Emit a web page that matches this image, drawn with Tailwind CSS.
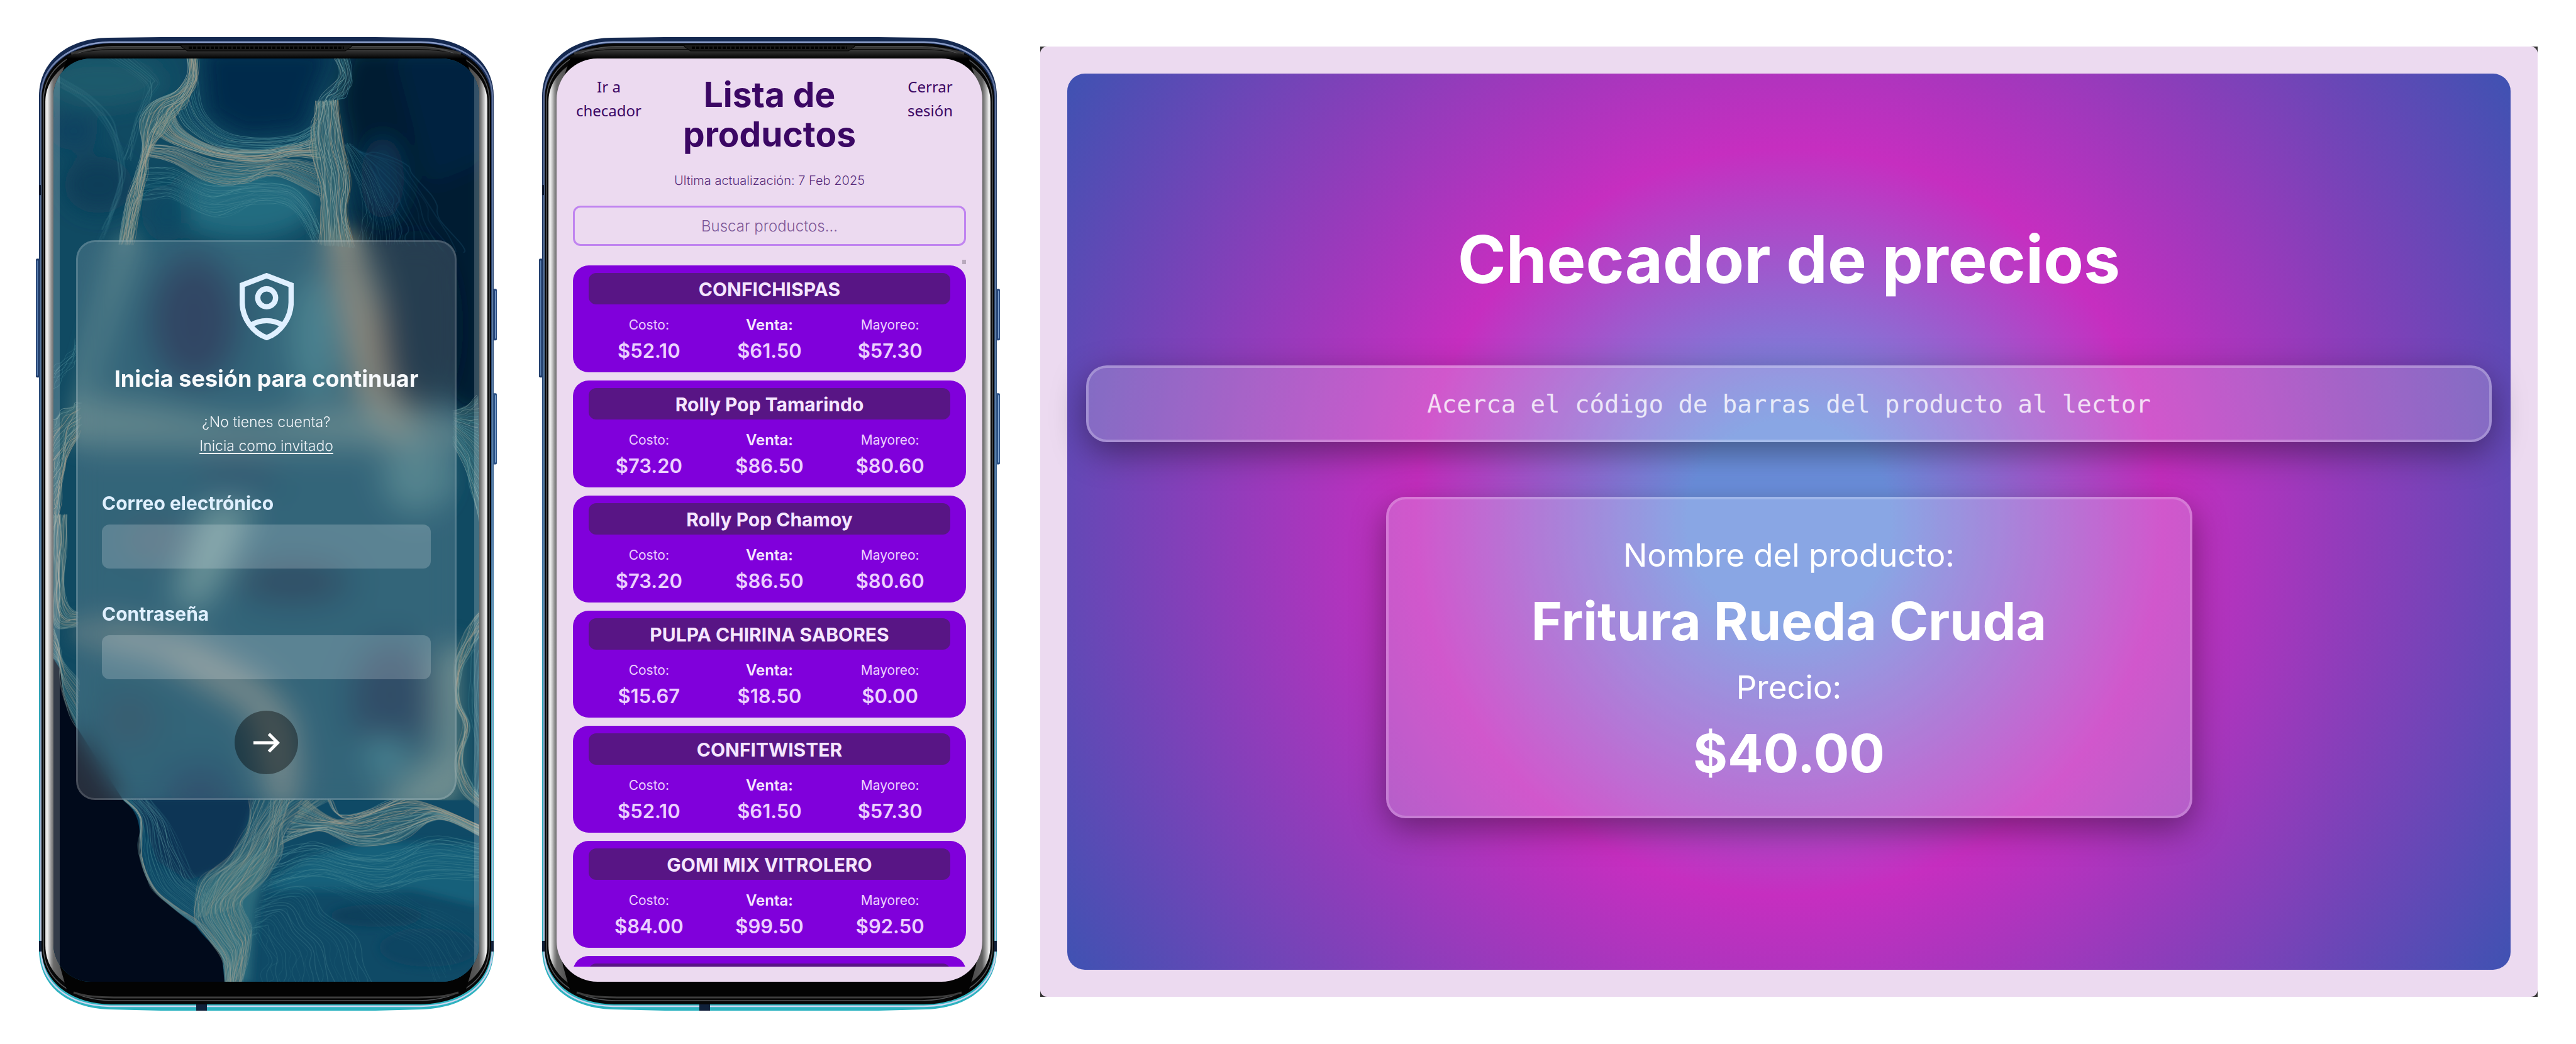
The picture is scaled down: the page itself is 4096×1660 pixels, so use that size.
<!DOCTYPE html>
<html lang="es">
<head>
<meta charset="utf-8">
<meta name="viewport" content="width=device-width, initial-scale=1">
<title>Checador de precios</title>
<script src="https://cdn.jsdelivr.net/npm/@tailwindcss/browser@4"></script>
</head>
<body class="bg-white font-['Inter',sans-serif]">

<!-- Phone body, shared by both devices -->
<svg class="absolute size-0" aria-hidden="true">
  <defs>
    <linearGradient id="rim" x1="0" y1="0" x2="0" y2="1">
      <stop offset="0" stop-color="#14284f"/><stop offset=".3" stop-color="#1f3a66"/><stop offset=".52" stop-color="#3d6a9c"/><stop offset=".68" stop-color="#2aa5b6"/><stop offset="1" stop-color="#2db3c0"/>
    </linearGradient>
    <linearGradient id="rimLight" x1="0" y1="0" x2="0" y2="1">
      <stop offset="0" stop-color="#8c9fcc"/><stop offset=".04" stop-color="#5f7099"/><stop offset=".5" stop-color="#5580a8"/><stop offset="1" stop-color="#cfd6f0"/>
    </linearGradient>
    <linearGradient id="silver" x1="0" y1="0" x2="1" y2="0">
      <stop offset="0" stop-color="#c9c9c9"/><stop offset=".004" stop-color="#f2f2f2"/><stop offset=".009" stop-color="#c4c4c4"/><stop offset=".014" stop-color="#8e8e8e"/><stop offset=".019" stop-color="#6b6b6b"/><stop offset=".05" stop-color="#444"/>
      <stop offset=".95" stop-color="#444"/><stop offset=".981" stop-color="#5e5e5e"/><stop offset=".987" stop-color="#8e8e8e"/><stop offset=".993" stop-color="#c9c9c9"/><stop offset=".997" stop-color="#f7f7f7"/><stop offset="1" stop-color="#c9c9c9"/>
    </linearGradient>
    <linearGradient id="shade" x1="0" y1="0" x2="0" y2="1">
      <stop offset="0" stop-color="#3a3a3a"/><stop offset=".09" stop-color="#1a1a1a"/><stop offset=".16" stop-color="#000"/><stop offset="1" stop-color="#000"/>
    </linearGradient>
    <symbol id="phone" viewBox="0 0 736 1548" preserveAspectRatio="none">
      <rect x="0" y="353" width="8" height="189" rx="2" fill="#1c3866"/>
      <rect x="1.5" y="356" width="2" height="183" fill="#5b7fb0"/>
      <rect x="725" y="401" width="8" height="82" rx="2" fill="#27477c"/>
      <rect x="730" y="404" width="1.500" height="76" fill="#7fa0cc"/>
      <rect x="725" y="567" width="8" height="113" rx="2" fill="#2c5286"/>
      <rect x="730" y="570" width="1.500" height="107" fill="#86a9d3"/>
      <path d="M5 95C5 40 50 3 115 2L200 1H540L615 2C682 3 728 40 728 95V1450C728 1508 685 1543 615 1546L540 1548H200L115 1546C48 1543 5 1508 5 1450Z" fill="url(#rim)"/>
      <path d="M8 97C8 45 55 10 118 9H612C680 10 726 45 726 97V1450C726 1504 683 1540 612 1541H118C50 1540 8 1504 8 1450Z" fill="none" stroke="url(#rimLight)" stroke-width="2.500"/>
      <rect x="5" y="236" width="3" height="16" fill="#0c1a33"/>
      <rect x="5" y="1437" width="4" height="17" fill="#10203a"/>
      <rect x="724" y="1437" width="4" height="17" fill="#10203a"/>
      <rect x="255" y="1537" width="17" height="11" fill="#10203a"/>
      <path d="M9 100C9 48 56 12 120 11H611C676 12 724 48 724 100V1448C724 1500 680 1537 611 1538H120C53 1537 9 1500 9 1448Z" fill="#070707"/>
      <path d="M12 102C12 52 58 17 122 16H609C672 17 721 52 721 102V1446C721 1498 676 1531 609 1532H122C56 1531 12 1498 12 1446Z" fill="none" stroke="#55575a" stroke-width="1.500"/>
      <path d="M15 104C15 58 62 24 124 23H607C670 24 718 58 718 104V1444C718 1492 672 1526 607 1527H124C60 1526 15 1492 15 1444Z" fill="url(#silver)"/>
      <path d="M51 31C72 24 96 22 124 21H607C636 22 660 24 682 31L692 60L700 110H33L41 60Z" fill="url(#shade)"/>
      <path d="M38 1476L33 1430H700L695 1476L683 1518C660 1526 636 1528 607 1529H124C96 1528 72 1526 50 1518Z" fill="#030303"/>
      <path d="M60 1519C80 1526 100 1527 124 1527H607C632 1527 652 1526 672 1519" fill="none" stroke="#3c3c3c" stroke-width="3"/>
      <path d="M56 27C78 21 100 18 124 18H607C632 18 654 21 676 27" fill="none" stroke="#4a4a4a" stroke-width="4" opacity=".7"/>
      <path d="M231 13H502V16L492 23H241L231 16Z" fill="#1b1b1b" stroke="#050505"/>
      <path d="M243 18H490" stroke="#000" stroke-width="4" stroke-dasharray="5 2"/>
    </symbol>
    <filter id="soft" x="-50%" y="-50%" width="200%" height="200%"><feGaussianBlur stdDeviation="34"/></filter>
    <filter id="softer" x="-50%" y="-50%" width="200%" height="200%"><feGaussianBlur stdDeviation="14"/></filter>
  </defs>
</svg>

<main class="flex min-h-screen items-start pt-[58px] pr-[61px] pl-[57px]">
  <div class="flex shrink-0 gap-16">

    <!-- Login -->
    <section class="relative w-[736px] pt-[35px] pr-[31px] pb-[46px] pl-[28px]">
      <svg class="absolute inset-0 h-full w-full" aria-hidden="true"><use href="#phone"/></svg>
      <div class="relative flex min-h-[1468px] items-center overflow-hidden rounded-[60px] bg-[#0c3f58] px-9">
        <svg class="absolute inset-0 h-full w-full" viewBox="0 0 677 1467" preserveAspectRatio="none" aria-hidden="true">
          <rect width="677" height="1467" fill="#104a62"/>
          <g transform="matrix(.491 0 0 .5003 -41.4 -49.4)" id="upper">
            <g filter="url(#soft)">
              <path d="M1040 60H1500V1240L1380 1220L1060 700L1040 400L1000 230Z" fill="#021a33"/>
              <path d="M1180 60H1500V420L1300 500Z" fill="#03213f"/>
              <path d="M560 60H1000L930 230L900 330L700 350L580 280Z" fill="#04294b"/>
              <ellipse cx="240" cy="170" rx="200" ry="80" fill="#1c5a6c"/>
              <ellipse cx="230" cy="500" rx="110" ry="90" fill="#0d3c58"/>
              <ellipse cx="150" cy="330" rx="80" ry="60" fill="#0e4360"/>
              <ellipse cx="700" cy="560" rx="230" ry="110" fill="#236c80"/>
              <ellipse cx="450" cy="590" rx="80" ry="90" fill="#0f4964"/>
              <ellipse cx="1150" cy="480" rx="70" ry="130" fill="#0a3652"/>
            </g>
            <g filter="url(#soft)">
              <ellipse cx="540" cy="930" rx="140" ry="200" fill="#07284a"/>
              <ellipse cx="1260" cy="950" rx="120" ry="280" fill="#021a33"/>
              <path d="M960 640L1070 650L1130 900L1160 1150L1260 1280L1180 1320L1060 1150L1020 900Z" fill="#7d7869"/>
              <path d="M300 660L360 660L260 950L180 1220H150Z" fill="#528085"/>
              <path d="M150 1180C500 1180 600 1280 820 1240C1000 1180 1200 1200 1380 1250V1340L900 1330L150 1330Z" fill="#6c8a88" opacity=".6"/>
              <ellipse cx="680" cy="1430" rx="130" ry="90" fill="#0c3f5c"/>
              <ellipse cx="930" cy="980" rx="80" ry="200" fill="#2a6c7b"/>
              <ellipse cx="1260" cy="1430" rx="110" ry="110" fill="#37707b"/>
            </g>
          </g>
          <g transform="matrix(.491 0 0 .5096 -41.4 735)" id="lower">
            <g filter="url(#soft)">
              <ellipse cx="420" cy="60" rx="110" ry="50" fill="#26455c"/>
              <path d="M580 -60L740 -60L640 160L560 280L470 250Z" fill="#548388"/>
              <ellipse cx="860" cy="190" rx="180" ry="60" fill="#0b2f4a"/>
              <path d="M150 330L300 320L560 390L760 500L860 620L880 860H780L730 600L420 420L150 360Z" fill="#80877f" opacity=".8"/>
              <ellipse cx="1180" cy="560" rx="130" ry="180" fill="#0a2f4e"/>
              <ellipse cx="330" cy="620" rx="90" ry="90" fill="#124258"/>
              <ellipse cx="560" cy="830" rx="110" ry="60" fill="#0c3656"/>
              <path d="M1330 400L1400 380V880L1100 880L1330 740Z" fill="#5f8080"/>
              <ellipse cx="1160" cy="730" rx="70" ry="50" fill="#2c7585"/>
            </g>
            <path d="M60 870H1500V1460H640Z" fill="#0f4a66"/>
            <g filter="url(#softer)">
              <path d="M330 860H740L690 1000L640 1080L520 1120L420 1060L380 950Z" fill="#0a3655"/>
              <path d="M760 1150L900 1050L1100 1000L1460 1010V1200L1250 1150Z" fill="#17607a"/>
              <ellipse cx="1130" cy="1230" rx="150" ry="35" fill="#0c3f5b"/>
              <ellipse cx="1300" cy="1330" rx="160" ry="60" fill="#0c4562"/>
              <path d="M580 1120L800 1000L740 1200L720 1440H650L600 1300L550 1210Z" fill="#2b6b7b"/>
            </g>
            <path d="M60 400L85 430L105 460C112 500 118 560 158 640L310 870C350 900 365 930 365 1000C365 1060 385 1120 420 1160C460 1200 500 1230 545 1262C580 1310 620 1330 632 1370L640 1460H60Z" fill="#010a1b"/>
          </g>
        </svg>

        <form class="relative flex w-full flex-col items-center rounded-[30px] border-[3px] border-white/15 bg-white/15 px-[38px] pt-[49px] pb-[38px] backdrop-blur-[20px]">
          <svg class="h-[107px] w-[86px]" viewBox="130 106 357 444" fill="none" stroke="#e0f0ff" stroke-width="35" aria-hidden="true">
            <path d="M308.500 124L470 186V300C470 400 402 500 308.500 533C215 500 147 400 147 300V186Z"/>
            <circle cx="308.500" cy="270" r="59"/>
            <path d="M205 450C268 411 349 411 412 450"/>
          </svg>
          <h1 class="mt-[37px] text-[36px] leading-[48px] font-bold whitespace-nowrap text-slate-50">Inicia sesión para continuar</h1>
          <p class="mt-[26px] text-center text-[23px] leading-[38px] font-light text-slate-100">¿No tienes cuenta?<br><a href="#" class="underline underline-offset-[3px]">Inicia como invitado</a></p>
          <label for="correo" class="mt-[52px] self-start text-[30px] leading-[40px] font-bold text-[#e0f0ff]">Correo electrónico</label>
          <input id="correo" type="email" class="mt-[14px] h-[70px] w-full rounded-xl bg-white/20 px-5 text-[28px] text-white outline-none">
          <label for="clave" class="mt-[52px] self-start text-[30px] leading-[40px] font-bold text-[#e0f0ff]">Contraseña</label>
          <input id="clave" type="password" class="mt-[14px] h-[70px] w-full rounded-xl bg-white/20 px-5 text-[28px] text-white outline-none">
          <button type="submit" aria-label="Entrar" class="mt-[50px] flex size-[101px] items-center justify-center rounded-full bg-black/40">
            <svg class="h-8 w-[42px]" viewBox="0 0 42 32" fill="none" stroke="#fff" stroke-width="5" aria-hidden="true"><path d="M0 16H39M24.500 2L38.500 16L24.500 30"/></svg>
          </button>
        </form>

        <!-- Curved-glass reflections -->
        <div class="absolute inset-y-0 left-0 w-[10px] bg-white/20"></div>
        <div class="absolute inset-y-0 right-0 w-[8px] bg-white/20"></div>
      </div>
    </section>

    <!-- Product list -->
    <section class="relative w-[736px] pt-[35px] pr-[31px] pb-[46px] pl-[28px]">
      <svg class="absolute inset-0 h-full w-full" aria-hidden="true"><use href="#phone"/></svg>
      <div class="relative flex h-[1468px] flex-col overflow-hidden rounded-[65px] bg-[#ecdaf0] px-[26px] pt-[26px] pb-6 text-[#3b0764]">
        <header class="flex items-start">
          <a href="#" class="w-[114px] text-center font-['Noto_Sans',sans-serif] text-[24px] leading-[38px]">Ir a checador</a>
          <h2 class="flex-1 text-center text-[55px] leading-[63px] font-bold">Lista de<br>productos</h2>
          <a href="#" class="w-[114px] text-center font-['Noto_Sans',sans-serif] text-[24px] leading-[38px]">Cerrar sesión</a>
        </header>
        <p class="mt-[27px] text-center text-[20px] leading-[30px] font-light text-[#3b0764]/85">Ultima actualización: 7 Feb 2025</p>
        <input type="text" role="searchbox" aria-label="Buscar productos" placeholder="Buscar productos..." class="mt-[25px] h-16 w-full shrink-0 rounded-xl border-[3px] border-[#c084f0] text-center text-[24px] font-light outline-none placeholder:text-[#3b0764]/65">
        <div class="relative mt-[31px] min-h-0 flex-1">
          <div class="absolute -top-[9px] right-0 h-[7px] w-[6px] bg-[#b9a9bd]"></div>
          <ul id="lista" class="flex h-full flex-col gap-[13px] overflow-hidden"></ul>
        </div>
      </div>
    </section>
  </div>

  <!-- Price checker -->
  <div class="mt-4 ml-[61px] flex-1 bg-[#333]">
    <section class="flex min-h-[1511px] rounded-[11px] bg-[#ecdaf0] p-[43px]">
      <div class="flex flex-1 flex-col items-center rounded-[28px] bg-[radial-gradient(circle,#6c90de_12%,#c62ec0_44%,#3f52b2_100%)] px-[30px] pt-[231px] text-white">
        <h2 class="text-[104px] leading-[128px] font-bold">Checador de precios</h2>
        <input type="text" aria-label="Código de barras" placeholder="Acerca el código de barras del producto al lector" class="mt-[105px] h-[122px] w-full rounded-[33px] border-4 border-white/25 bg-white/20 text-center font-['DejaVu_Sans_Mono',monospace] text-[39px] shadow-[0_17px_54px_rgba(0,0,0,0.4)] outline-none placeholder:text-white/80">
        <dl class="mt-[87px] w-[1282px] rounded-[31px] border-4 border-white/20 bg-white/20 px-8 pt-[50px] pb-[33px] text-center shadow-[0_17px_54px_rgba(0,0,0,0.4)]">
          <dt class="text-[51px] leading-[78px]">Nombre del producto:</dt>
          <dd class="text-[84px] leading-[132px] font-bold">Fritura Rueda Cruda</dd>
          <dt class="text-[51px] leading-[78px]">Precio:</dt>
          <dd class="text-[84px] leading-[132px] font-bold">$40.00</dd>
        </dl>
      </div>
    </section>
  </div>
</main>

<script>
// ---- Product cards ----
const productos = [
  ['CONFICHISPAS', '$52.10', '$61.50', '$57.30'],
  ['Rolly Pop Tamarindo', '$73.20', '$86.50', '$80.60'],
  ['Rolly Pop Chamoy', '$73.20', '$86.50', '$80.60'],
  ['PULPA CHIRINA SABORES', '$15.67', '$18.50', '$0.00'],
  ['CONFITWISTER', '$52.10', '$61.50', '$57.30'],
  ['GOMI MIX VITROLERO', '$84.00', '$99.50', '$92.50'],
];
document.getElementById('lista').innerHTML = productos.map(([nombre, costo, venta, mayoreo]) => `
  <li class="h-[170px] shrink-0 rounded-[25px] bg-[#8000db] px-[25px] py-3 text-center">
    <h3 class="h-[50px] rounded-xl bg-[#581585] text-[30px] leading-[52px] font-bold text-[#f5e6ff]">${nombre}</h3>
    <dl class="mt-4 grid grid-cols-3">
      <div><dt class="text-[21px] leading-[34px] text-[#ecd0ff]">Costo:</dt><dd class="text-[31px] leading-[48px] font-semibold text-[#ecd0ff]">${costo}</dd></div>
      <div><dt class="text-[24px] leading-[34px] font-semibold text-[#f5e6ff]">Venta:</dt><dd class="text-[31px] leading-[48px] font-semibold text-[#ecd0ff]">${venta}</dd></div>
      <div><dt class="text-[21px] leading-[34px] text-[#ecd0ff]">Mayoreo:</dt><dd class="text-[31px] leading-[48px] font-semibold text-[#ecd0ff]">${mayoreo}</dd></div>
    </dl>
  </li>`).join('') + `
  <li class="h-[170px] shrink-0 rounded-[25px] bg-[#8000db] px-[25px] py-3" aria-hidden="true"><div class="h-[50px] rounded-xl bg-[#581585]"></div></li>`;

// ---- Wallpaper: ribbons of fine lines between two edge curves ----
let seed = 7;
const rnd = () => (seed = (seed * 16807) % 2147483647) / 2147483647;
const TAN = ['#b3a58f', '#9aa39a', '#86a5a3', '#a89c88', '#6f9a9d'];
const TEAL = ['#4d8d99', '#5f9ba2', '#3b7d8d'];
const smooth = p => {
  let d = `M${p[0][0].toFixed(1)} ${p[0][1].toFixed(1)}`;
  for (let i = 0; i < p.length - 1; i++) {
    const a = p[i - 1] || p[i], b = p[i], c = p[i + 1], e = p[i + 2] || c;
    d += `C${(b[0] + (c[0] - a[0]) / 6).toFixed(1)} ${(b[1] + (c[1] - a[1]) / 6).toFixed(1)} ${(c[0] - (e[0] - b[0]) / 6).toFixed(1)} ${(c[1] - (e[1] - b[1]) / 6).toFixed(1)} ${c[0].toFixed(1)} ${c[1].toFixed(1)}`;
  }
  return d;
};
const dense = (p, n) => {
  const out = [];
  for (let i = 0; i < p.length - 1; i++) for (let k = 0; k < n; k++) {
    const t = k / n, a = p[i - 1] || p[i], b = p[i], c = p[i + 1], e = p[i + 2] || c;
    out.push([0, 1].map(j => .5 * (2 * b[j] + (c[j] - a[j]) * t + (2 * a[j] - 5 * b[j] + 4 * c[j] - e[j]) * t * t + (3 * b[j] - a[j] - 3 * c[j] + e[j]) * t * t * t)));
  }
  out.push(p[p.length - 1]);
  return out;
};
function ribbon(id, a, b, n, palette, opacity, jitter = 5, width = 2, body = 0) {
  const A = dense(a, 4), B = dense(b, 4);
  let s = '';
  if (body) s += `<path d="${smooth(A)}L${[...B].reverse().map(q => q.map(v => v.toFixed(1)).join(' ')).join('L')}Z" fill="#4f7d80" opacity="${body}"/>`;
  for (let i = 0; i < n; i++) {
    const t = n > 1 ? i / (n - 1) : 0, ph = rnd() * 6.28, f = .5 + rnd() * .8, m = jitter * (.4 + rnd() * .8);
    const pts = A.map((q, k) => {
      const w = Math.sin(k * f + ph) * m;
      return [q[0] + (B[k][0] - q[0]) * t + w, q[1] + (B[k][1] - q[1]) * t + w * .6];
    });
    s += `<path d="${smooth(pts)}" fill="none" stroke="${palette[Math.floor(rnd() * palette.length)]}" stroke-width="${width}" opacity="${(opacity * (.5 + rnd() * .6)).toFixed(2)}"/>`;
  }
  document.getElementById(id).insertAdjacentHTML('beforeend', s);
}
// faint veils, upper left and right
ribbon('upper', [[90,150],[220,230],[290,330],[310,480],[260,600]], [[110,190],[200,250],[270,350],[300,500],[230,690]], 9, TEAL, .16, 8, 5);
ribbon('upper', [[250,95],[340,150],[380,200],[350,300],[300,420]], [[350,95],[420,160],[420,190],[370,280],[340,420]], 8, TEAL, .25, 6, 3);
ribbon('upper', [[1050,370],[1110,440],[1150,520],[1200,600],[1220,690]], [[1020,370],[1060,480],[1090,560],[1080,620],[1070,690]], 16, TEAL, .3, 5, 2);
ribbon('upper', [[1080,400],[1200,420],[1280,500],[1350,620],[1420,720]], [[1060,380],[1130,480],[1170,560],[1180,620],[1190,690]], 10, ['#1b5570'], .3, 12, 4);
// basin between the two strands
ribbon('upper', [[380,440],[480,450],[600,500],[760,490],[880,520],[950,640]], [[360,560],[450,540],[600,600],[760,560],[860,580],[930,690]], 26, TEAL, .4, 9, 2);
ribbon('upper', [[385,410],[470,430],[580,490],[680,500],[800,470],[950,540]], [[390,370],[480,380],[600,420],[720,430],[850,420],[930,430]], 34, TAN, .45, 7, 2, .25);
// rim of the bay
ribbon('upper', [[550,160],[570,260],[640,330],[750,350],[870,340],[935,300]], [[470,230],[510,310],[610,375],[750,388],[870,372],[935,340]], 20, [...TEAL, '#7fa9a8'], .55, 4, 2);
ribbon('upper', [[470,240],[500,320],[610,380],[750,390],[860,375],[930,350]], [[400,330],[470,370],[600,410],[740,430],[860,410],[950,420]], 30, TAN, .6, 5, 2, .4);
// left strand
ribbon('upper', [[515,90],[520,150],[480,200],[400,240],[365,300],[372,390],[345,480],[320,560],[295,690]], [[552,90],[548,170],[515,240],[490,270],[460,310],[400,390],[385,470],[365,570],[340,690]], 30, TAN, .6, 5, 2, .5);
// right strands
ribbon('upper', [[990,90],[1010,140],[990,180],[950,225],[930,260]], [[1038,90],[1052,170],[1030,215],[1010,230],[1000,240]], 15, [...TEAL, '#86a5a3'], .7, 4, 2, .2);
ribbon('upper', [[935,235],[925,300],[915,360],[930,440],[950,540],[945,690]], [[1003,230],[1012,300],[1025,390],[1044,490],[1034,590],[1058,700]], 32, TAN, .65, 5, 2, .5);
ribbon('upper', [[1003,230],[1012,300],[1025,390],[1044,490],[1034,590],[1052,690]], [[1007,230],[1016,300],[1029,390],[1048,490],[1038,590],[1058,690]], 2, ['#8f7450'], .8, 1, 2);
// sides of the form
ribbon('upper', [[85,1080],[110,1060],[140,1030],[158,990]], [[85,1150],[110,1120],[140,1080],[160,1060]], 8, TEAL, .5, 5, 2);
ribbon('upper', [[85,1250],[110,1220],[150,1200],[170,1190]], [[85,1600],[110,1500],[120,1380],[170,1300]], 26, TAN, .6, 6, 2, .4);
ribbon('upper', [[1460,1170],[1430,1195],[1400,1210],[1380,1220]], [[1470,1590],[1440,1480],[1420,1400],[1380,1330]], 34, [...TEAL, '#86a5a3'], .6, 6, 2, .4);
ribbon('lower', [[85,-20],[85,100],[85,240],[90,330],[160,330]], [[130,-20],[125,100],[120,220],[140,270],[165,285]], 16, TAN, .75, 4, 2, .4);
ribbon('lower', [[85,330],[100,380],[120,440],[170,500]], [[85,425],[105,455],[118,560],[160,645]], 16, TAN, .5, 4, 2, .3);
ribbon('lower', [[1470,270],[1420,340],[1385,450],[1385,560],[1412,640],[1385,760],[1400,840],[1470,900]], [[1470,350],[1440,400],[1405,470],[1400,560],[1430,640],[1410,740],[1440,820],[1470,860]], 14, TAN, .7, 4, 2, .3);
ribbon('lower', [[1440,400],[1430,560],[1450,700],[1440,860]], [[1470,400],[1470,560],[1480,700],[1470,860]], 8, TEAL, .5, 6, 2);
// coast along the dark water
ribbon('lower', [[310,868],[362,925],[364,1040],[400,1140],[470,1205],[545,1258]], [[400,868],[450,930],[500,1020],[540,1100],[560,1120],[600,1150]], 26, TEAL, .5, 5, 2);
ribbon('lower', [[310,868],[362,925],[364,1040],[400,1140],[470,1205],[545,1258],[590,1310],[632,1370],[640,1450]], [[318,868],[368,925],[370,1040],[408,1140],[478,1200],[550,1245],[604,1300],[650,1370],[660,1450]], 6, TAN, .7, 2, 2);
// current flowing down the middle
ribbon('lower', [[720,868],[710,950],[650,1050],[560,1120],[540,1230],[590,1310],[640,1380],[640,1450]], [[980,868],[850,950],[820,1040],[780,1110],[700,1180],[722,1260],[725,1310],[690,1450]], 50, TAN, .45, 6, 2, .3);
ribbon('lower', [[790,868],[770,940],[700,1020],[645,1080],[570,1180],[545,1240]], [[850,868],[830,960],[820,1040],[760,1110],[700,1180],[690,1200]], 18, TAN, .45, 5, 2, .25);
ribbon('lower', [[900,868],[1000,930],[1100,910],[1220,868],[1320,890],[1470,950]], [[820,1010],[940,965],[1060,1010],[1200,1000],[1330,930],[1470,985]], 34, TAN, .6, 7, 2, .4);
ribbon('lower', [[970,868],[1010,915],[1100,900],[1180,868]], [[985,868],[1020,925],[1110,915],[1220,868]], 6, TAN, .8, 3, 2);
// open water, lower right
ribbon('lower', [[820,1030],[930,1000],[1060,1040],[1200,1030],[1330,980],[1470,1010]], [[760,1160],[900,1110],[1010,1120],[1130,1160],[1270,1120],[1470,1120]], 26, TEAL, .45, 9, 2);
ribbon('lower', [[760,1170],[900,1140],[960,1220],[1060,1290],[1090,1380],[1120,1450]], [[720,1300],[740,1290],[760,1330],[780,1380],[760,1420],[760,1450]], 24, TEAL, .35, 8, 2);
ribbon('lower', [[930,1140],[1040,1180],[1160,1280],[1260,1330],[1320,1450]], [[1180,1140],[1280,1200],[1350,1220],[1420,1260],[1470,1300]], 16, TEAL, .25, 9, 2);
</script>
</body>
</html>
